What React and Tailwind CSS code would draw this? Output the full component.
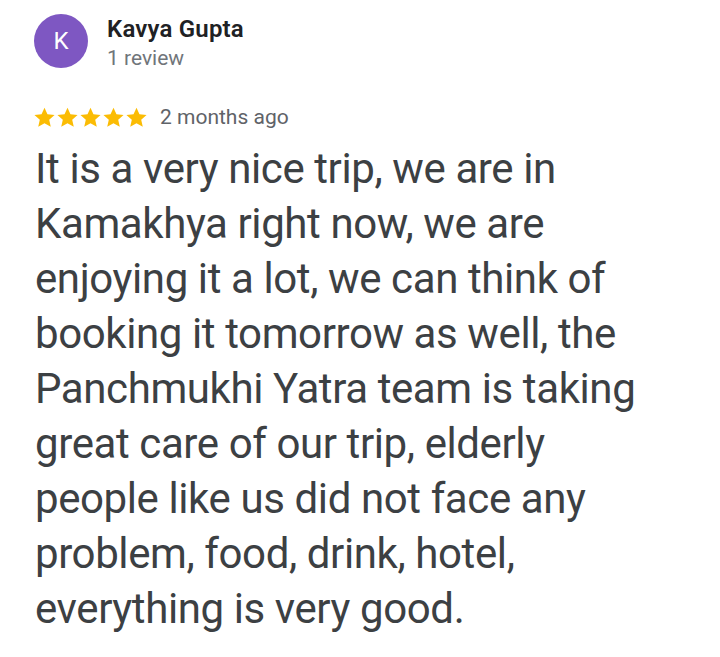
import React from "react";

const Star = () => (
  <svg width="23" height="23" viewBox="0 0 24 24" className="shrink-0">
    <path fill="#fbbc04" d="M12 1.8l3.09 6.88 7.41.68-5.6 4.98 1.64 7.36L12 17.9l-6.54 3.8 1.64-7.36-5.6-4.98 7.41-.68z" />
  </svg>
);

const lines = [
  "It is a very nice trip, we are in",
  "Kamakhya right now, we are",
  "enjoying it a lot, we can think of",
  "booking it tomorrow as well, the",
  "Panchmukhi Yatra team is taking",
  "great care of our trip, elderly",
  "people like us did not face any",
  "problem, food, drink, hotel,",
  "everything is very good.",
];

export default function App() {
  return (
    <div className="w-[720px] h-[657px] bg-white overflow-hidden font-['Roboto',sans-serif]">
      <div className="flex items-start pl-[34px] pt-[14px] gap-[19px]">
        <div className="w-[54px] h-[54px] rounded-full bg-[#7e57c2] flex items-center justify-center text-white text-[24px] leading-none">
          K
        </div>
        <div className="flex flex-col pt-[1px]">
          <div className="text-[24px] leading-[28px] font-semibold text-[#202124] tracking-[0.2px]">Kavya Gupta</div>
          <div className="text-[21px] leading-[26px] mt-[2px] text-[#70757a]">1 review</div>
        </div>
      </div>
      <div className="flex items-center pl-[33px] mt-[33px] gap-[12px]">
        <div className="flex items-center">
          <Star /><Star /><Star /><Star /><Star />
        </div>
        <div className="text-[21px] leading-[26px] text-[#5f6368]">2 months ago</div>
      </div>
      <div className="pl-[35px] mt-[11px] text-[#3c4043] text-[42px] leading-[55px] tracking-[-0.4px]">
        {lines.map((l, i) => (
          <div key={i} className="whitespace-nowrap">{l}</div>
        ))}
      </div>
    </div>
  );
}
